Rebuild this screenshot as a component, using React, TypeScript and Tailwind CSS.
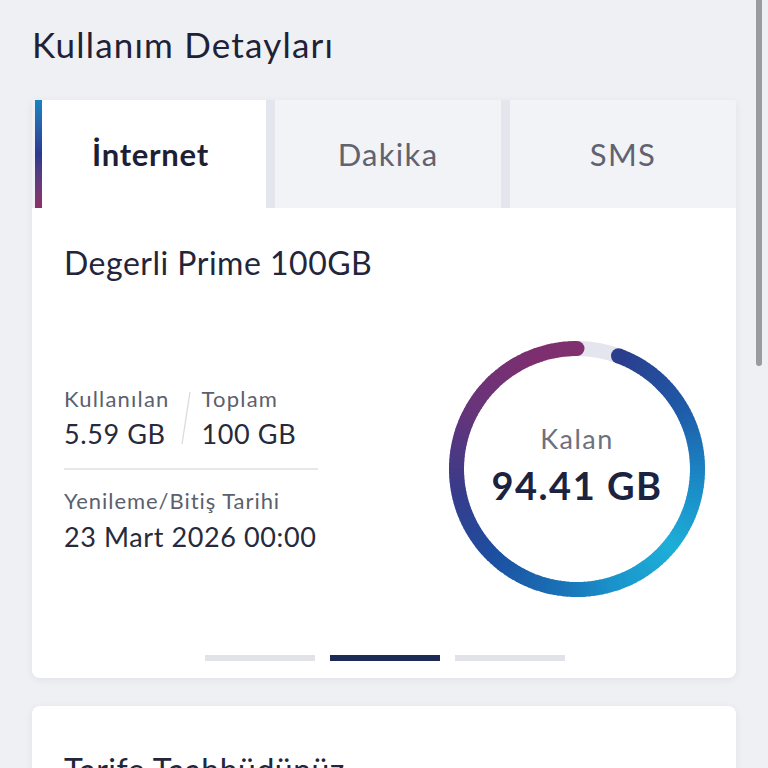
import type { ReactNode } from "react";

const FONT = { fontFamily: "Lato, 'Noto Sans', sans-serif" };

// colour stops along the ring, in degrees clockwise from 12 o'clock
const RING_STOPS: [number, string][] = [
  [20, "#2b3d8d"],
  [60, "#1f5aa7"],
  [95, "#1a88c5"],
  [130, "#1dafd8"],
  [160, "#1a96cd"],
  [190, "#1a6fb5"],
  [225, "#1d4ea0"],
  [260, "#383b8a"],
  [300, "#683479"],
  [340, "#7c2f6f"],
  [360, "#80306f"],
];

function hex(c: string) {
  return [1, 3, 5].map((i) => parseInt(c.slice(i, i + 2), 16));
}

function colorAt(deg: number) {
  for (let i = 0; i < RING_STOPS.length - 1; i++) {
    const [d0, c0] = RING_STOPS[i];
    const [d1, c1] = RING_STOPS[i + 1];
    if (deg <= d1) {
      const t = Math.max(0, (deg - d0) / (d1 - d0));
      const a = hex(c0);
      const b = hex(c1);
      return `rgb(${a.map((v, k) => Math.round(v + (b[k] - v) * t)).join(",")})`;
    }
  }
  return RING_STOPS[RING_STOPS.length - 1][1];
}

function Tab({ label, active }: { label: string; active?: boolean }) {
  if (active) {
    return (
      <div className="w-[231px] flex items-stretch bg-white">
        <div className="w-[7px] bg-gradient-to-b from-[#1783c3] via-[#2b3a90] to-[#8e2f66]" />
        <div className="flex-1 flex items-center justify-center pr-[7px] text-[31px] tracking-[0.7px] font-bold text-[#1d2035]">
          {label}
        </div>
      </div>
    );
  }
  return (
    <div className="flex-1 flex items-center justify-center bg-[#f2f3f6] text-[31px] tracking-[1.3px] text-[#60636f]">
      {label}
    </div>
  );
}

function Stat({ label, value }: { label: string; value: ReactNode }) {
  return (
    <div className="flex flex-col">
      <span className="text-[22px] leading-[28px] tracking-[1.2px] text-[#5c5f6d]">{label}</span>
      <span className="mt-[4px] text-[27px] leading-[34px] tracking-[0.6px] text-[#272a3b]">{value}</span>
    </div>
  );
}

function Ring({ used, total, remaining }: { used: number; total: number; remaining: string }) {
  const r = 120.5;
  const start = (used / total) * 360;
  const pt = (deg: number) => {
    const a = (deg * Math.PI) / 180;
    return [128 + r * Math.sin(a), 128 - r * Math.cos(a)];
  };
  const step = 2;
  const segs: { d: string; c: string }[] = [];
  for (let d = start; d < 360; d += step) {
    const e = Math.min(360, d + step + 0.4);
    const [x0, y0] = pt(d);
    const [x1, y1] = pt(e);
    segs.push({ d: `M ${x0} ${y0} A ${r} ${r} 0 0 1 ${x1} ${y1}`, c: colorAt((d + e) / 2) });
  }
  const [sx, sy] = pt(start);
  const [ex, ey] = pt(360);
  return (
    <div className="relative w-[256px] h-[256px]">
      <svg width="256" height="256" viewBox="0 0 256 256">
        <circle cx="128" cy="128" r={r} fill="none" stroke="#e4e5ee" strokeWidth="15" />
        {segs.map((s, i) => (
          <path key={i} d={s.d} fill="none" stroke={s.c} strokeWidth="15" />
        ))}
        <circle cx={sx} cy={sy} r="7.5" fill={colorAt(start)} />
        <circle cx={ex} cy={ey} r="7.5" fill={colorAt(360)} />
      </svg>
      <div className="absolute inset-0 flex flex-col items-center justify-center pb-[7px]">
        <span className="text-[27px] leading-[30px] tracking-[1.5px] text-[#6d707e]">Kalan</span>
        <span className="mt-[9px] text-[38px] leading-[44px] tracking-[1.5px] font-bold text-[#1c2340]">
          {remaining}
        </span>
      </div>
    </div>
  );
}

export default function App() {
  return (
    <div className="relative h-[768px] overflow-hidden bg-[#eff0f4] px-8" style={FONT}>
      <h1 className="pt-[24px] text-[35px] leading-[40px] tracking-[1.2px] text-[#1f2237]">Kullanım Detayları</h1>

      <div className="mt-[36px] rounded-b-lg shadow-[0_2px_10px_rgba(20,25,50,0.06)]">
        <div className="flex gap-[9px] h-[108px] ml-[3px] bg-[#e4e6ed]">
          <Tab label="İnternet" active />
          <Tab label="Dakika" />
          <Tab label="SMS" />
        </div>

        <div className="bg-white rounded-b-lg pt-[37px] pl-8 pr-[31px] pb-[17px]">
          <h2 className="text-[32px] leading-[36px] tracking-[0.5px] text-[#23263a]">Degerli Prime 100GB</h2>

          <div className="mt-[60px] flex items-center justify-between">
            <div className="flex flex-col w-[254px]">
              <div className="flex items-start gap-[10px]">
                <Stat label="Kullanılan" value="5.59 GB" />
                <svg width="12" height="56" viewBox="0 0 12 56" className="mt-[6px]">
                  <line x1="10" y1="1" x2="2" y2="53" stroke="#d9dbe1" strokeWidth="1.3" />
                </svg>
                <Stat label="Toplam" value="100 GB" />
              </div>
              <div className="mt-[17px] h-[2px] bg-[#e6e7eb]" />
              <span className="mt-[17px] text-[22px] leading-[28px] tracking-[0.95px] text-[#5c5f6d]">
                Yenileme/Bitiş Tarihi
              </span>
              <span className="mt-[5px] text-[27px] leading-[34px] tracking-[0.6px] text-[#272a3b] whitespace-nowrap">
                23 Mart 2026 00:00
              </span>
            </div>
            <Ring used={5.59} total={100} remaining="94.41 GB" />
          </div>

          <div className="mt-[58px] flex justify-center gap-[15px]">
            <div className="w-[110px] h-[6px] bg-[#e1e3e8]" />
            <div className="w-[110px] h-[6px] bg-[#1c2b56]" />
            <div className="w-[110px] h-[6px] bg-[#e1e3e8]" />
          </div>
        </div>
      </div>

      <div className="mt-[28px] bg-white rounded-t-lg pt-[46px] px-8 h-[120px] shadow-[0_2px_10px_rgba(20,25,50,0.06)]">
        <h2 className="text-[32px] leading-[36px] tracking-[0.5px] text-[#23263a]">Tarife Taahhüdünüz</h2>
      </div>

      <div className="absolute right-[6px] top-0 w-[6px] h-[366px] rounded-b-sm bg-[#9a9a9f]" />
    </div>
  );
}
